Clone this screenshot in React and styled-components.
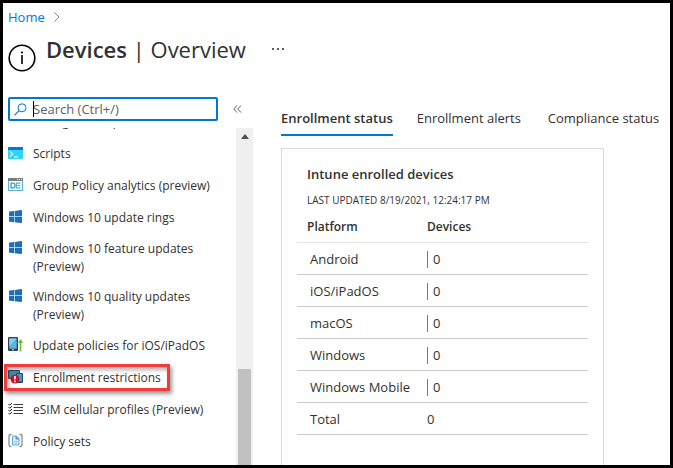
import React from "react";
import styled, { createGlobalStyle, css } from "styled-components";

const GlobalStyle = createGlobalStyle`
  *, *::before, *::after { box-sizing: border-box; }
  body {
    margin: 0;
    background: #fff;
    color: #323130;
    font-family: "Open Sans", "Noto Sans", sans-serif;
    font-size: 13px;
    line-height: 18px;
  }
  button, input { font: inherit; color: inherit; }
`;

const Frame = styled.div`
  display: flex;
  flex-direction: column;
  height: 100vh;
  border: 3px solid #000;
  overflow: hidden;
  background: #fff;
`;

const Breadcrumb = styled.nav`
  display: flex;
  align-items: center;
  gap: 9px;
  padding: 5px 5px 0;
`;

const CrumbLink = styled.a`
  color: #0078d4;
  text-decoration: none;
`;

const Header = styled.header`
  display: flex;
  align-items: flex-start;
  padding: 7px 5px 0;
  height: 57px;
`;

const InfoIcon = styled.svg`
  flex: none;
  margin: 11px 10px 0 0;
`;

const Title = styled.h1`
  margin: 0;
  font-size: 22px;
  line-height: 32px;
  font-weight: 400;
  white-space: nowrap;

  strong { font-weight: 600; }
`;

const IconButton = styled.button`
  display: flex;
  align-items: center;
  justify-content: center;
  flex: none;
  width: 16px;
  height: 24px;
  padding: 0;
  border: 0;
  background: none;
  cursor: pointer;
`;

const MoreButton = styled(IconButton)`
  margin: 4px 0 0 24px;
`;

const Main = styled.div`
  display: flex;
  flex: 1;
  min-height: 0;
  padding-top: 14px;
`;

const Sidebar = styled.aside`
  display: flex;
  flex-direction: column;
  flex: none;
  width: 250px;
`;

const SearchRow = styled.div`
  display: flex;
  align-items: center;
  gap: 11px;
  padding-left: 5px;
`;

const SearchBox = styled.label`
  position: relative;
  display: flex;
  align-items: center;
  gap: 6px;
  width: 210px;
  height: 24px;
  padding-left: 4px;
  border: 2px solid #0078d4;
  border-radius: 2px;
`;

const SearchInput = styled.input`
  flex: 1;
  min-width: 0;
  padding: 0;
  border: 0;
  outline: 0;
  background: none;

  &::placeholder { color: #605e5c; opacity: 1; }
`;

const Caret = styled.span`
  position: absolute;
  left: 23px;
  top: 2px;
  width: 1px;
  height: 16px;
  background: #000;
`;

const NavPane = styled.div`
  display: flex;
  flex: 1;
  min-height: 0;
  margin-top: 7px;
`;

const NavClip = styled.nav`
  display: flex;
  flex-direction: column;
  justify-content: flex-end;
  flex: 1;
  overflow: hidden;
  padding-bottom: 7px;
`;

const NavList = styled.ul`
  margin: 0;
  padding: 0;
  list-style: none;
  font-size: 12px;
`;

const NavItem = styled.li`
  position: relative;
`;

const NavLink = styled.a`
  display: flex;
  align-items: flex-start;
  gap: 9px;
  min-height: 32px;
  padding: ${(p) => (p.$tall ? "6px 30px 6px 5px" : "7px 0 7px 5px")};
  color: inherit;
  text-decoration: none;

  svg { flex: none; }
`;

const Highlight = styled.span`
  position: absolute;
  inset: 2px auto 3px 1px;
  width: 166px;
  border: 3px solid #f23c3c;
  box-shadow: 2px 3px 4px rgba(0, 0, 0, 0.4), inset 2px 3px 4px rgba(0, 0, 0, 0.3);
  pointer-events: none;
`;

const ScrollTrack = styled.div`
  display: flex;
  flex-direction: column;
  align-items: center;
  justify-content: space-between;
  width: 17px;
  padding-top: 6px;
  background: #f0f0f0;
`;

const ScrollThumb = styled.div`
  width: 13px;
  height: 29%;
  background: #c1c1c1;
`;

const Content = styled.main`
  display: flex;
  flex-direction: column;
  flex: 1;
  min-width: 0;
  padding: 9px 0 0 28px;
`;

const Tabs = styled.div`
  display: flex;
  gap: 24px;
  white-space: nowrap;
`;

const Tab = styled.button`
  flex: none;
  min-width: 107px;
  height: 30px;
  padding: 3px 0 7px;
  border: 0;
  border-bottom: 2px solid transparent;
  background: none;
  text-align: left;
  cursor: pointer;
  ${(p) =>
    p.$active &&
    css`
      border-color: #0078d4;
      font-weight: 600;
    `}
`;

const Card = styled.section`
  flex: 1;
  width: 323px;
  max-width: 100%;
  margin-top: 12px;
  padding: 16px 15px 0;
  border: 1px solid #d8d8d8;
  border-bottom: 0;
`;

const CardTitle = styled.h2`
  margin: 0 10px;
  font-size: 13px;
  line-height: 18px;
  font-weight: 600;
`;

const Updated = styled.p`
  margin: 9px 10px 0;
  font-size: 10px;
  line-height: 16px;
`;

const Table = styled.table`
  width: 100%;
  margin-top: 2px;
  border-collapse: collapse;
  table-layout: fixed;
`;

const HeadCell = styled.th`
  width: ${(p) => (p.$name ? "130px" : "auto")};
  height: 32px;
  padding: 2px 0 0 ${(p) => (p.$name ? "10px" : "0")};
  border-bottom: 1px solid #e4e4e4;
  font-size: 12px;
  font-weight: 600;
  text-align: left;
`;

const NameCell = styled.th`
  height: 32px;
  padding: 2px 0 0 13px;
  border-bottom: 1px solid #c8c8c8;
  font-weight: 400;
  text-align: left;
  white-space: nowrap;
`;

const ValueCell = styled.td`
  padding: 2px 0 0;
  border-bottom: 1px solid #c8c8c8;
`;

const Value = styled.span`
  display: block;
  line-height: 17px;
  ${(p) =>
    p.$bar &&
    css`
      padding-left: 5px;
      border-left: 1px solid #00a5d8;
    `}
`;

const ScriptIcon = () => (
  <svg width="16" height="16" viewBox="0 0 16 16" aria-hidden="true">
    <rect x="0" y="2" width="15" height="12" rx="1" fill="#32d4f5" />
    <path d="M0 5V3a1 1 0 0 1 1-1h13a1 1 0 0 1 1 1v2z" fill="#0078d4" />
    <path d="M2 6.5 4.8 9 2 11.5" fill="none" stroke="#d8f7ff" strokeWidth="1.2" />
    <path d="M6 12h4" stroke="#e8fbff" strokeWidth="1.2" />
  </svg>
);

const PolicyIcon = () => (
  <svg width="16" height="16" viewBox="0 0 16 16" aria-hidden="true">
    <rect x=".5" y="1.5" width="14" height="12" fill="#fff" stroke="#59b4d9" />
    <path d="M0 1h15v3H0z" fill="#7a7a7a" />
    <path d="M9 2h1v1H9zM11 2h1v1h-1zM13 2h1v1h-1z" fill="#fff" />
    <path d="M3 6.2h2.2q1.8 0 1.8 2.3t-1.8 2.3H3z" fill="none" stroke="#3f9dc9" strokeWidth="1.3" />
    <path d="M8 6.2h4.5M8 8.5H12.5M8 10.8h4.5M8.5 6v5" stroke="#59b4d9" strokeWidth="1.2" />
  </svg>
);

const WindowsIcon = () => (
  <svg width="16" height="16" viewBox="0 0 16 16" aria-hidden="true">
    <path d="M1 2.7 14 1v13L1 12.6z" fill="#a9cff0" />
    <path d="M1 2.7 6 2v5H1zM7 1.9 14 1v6H7zM1 8h5v5.2l-5-.6zM7 8H14V14l-7-.8z" fill="#1c70ba" />
  </svg>
);

const UpdateIcon = () => (
  <svg width="16" height="16" viewBox="0 0 16 16" aria-hidden="true">
    <rect x="0" y="0" width="10" height="14" rx="1" fill="#34404a" />
    <path d="M1.3 1.5h7.4v10.2H1.3z" fill="#5ab5de" />
    <path d="M1.3 1.5h7.4L1.3 9z" fill="#8bd0ee" />
    <path d="M4 12.8h2" stroke="#ddd" />
    <path d="M12.5 2 15.5 6h-2v8.5h-2V6h-2z" fill="#72b83a" stroke="#fff" strokeWidth=".3" />
  </svg>
);

const RestrictIcon = () => (
  <svg width="16" height="16" viewBox="0 0 16 16" aria-hidden="true">
    <rect x="0" y="1" width="12" height="9" rx="1" fill="#34505f" />
    <path d="M1 2h10v7H1z" fill="#3e8fb5" />
    <rect x="8" y="4" width="7" height="10" rx="1" fill="#27465a" />
    <path d="M9 5h5v7.5H9z" fill="#3aa0d0" />
    <circle cx="7" cy="10" r="4.5" fill="#c4172c" />
    <path d="M7 7v3.5" stroke="#fff" strokeWidth="1.5" />
    <circle cx="7" cy="12.3" r=".9" fill="#fff" />
  </svg>
);

const ProfileIcon = () => (
  <svg width="16" height="16" viewBox="0 0 16 16" aria-hidden="true">
    <path d="M5.5 3.5H15M5.5 6.5H15M5.5 9.5H15M5.5 12.5H15" stroke="#3c3c3c" />
    <path d="M.5 3 1.8 4.3 4 2M.5 6 1.8 7.3 4 5M.5 9l1.3 1.3L4 8M.5 12l1.3 1.3L4 11" fill="none" stroke="#222" />
  </svg>
);

const SetsIcon = () => (
  <svg width="16" height="16" viewBox="0 0 16 16" aria-hidden="true">
    <path d="M3.5 1.5H2.500Q1 1.5 1 3v9q0 1.5 1.5 1.5h1M11.5 1.5h1Q14 1.5 14 3v9q0 1.5-1.5 1.5h-1" fill="none" stroke="#8a8a8a" strokeWidth="1.3" />
    <path d="M4.5 3h4L11 5.5V12H4.500z" fill="#dff1fc" stroke="#59a9e0" />
    <path d="M8 3v3h3" fill="#69b5ea" stroke="#3c93d6" />
    <path d="M6 8.5h3.5M6 10.3h3.5" stroke="#8fc8ee" />
  </svg>
);

const navItems = [
  { label: "Configuration profiles", Icon: ProfileIcon },
  { label: "Scripts", Icon: ScriptIcon },
  { label: "Group Policy analytics (preview)", Icon: PolicyIcon },
  { label: "Windows 10 update rings", Icon: WindowsIcon },
  { label: "Windows 10 feature updates (Preview)", Icon: WindowsIcon, tall: true },
  { label: "Windows 10 quality updates (Preview)", Icon: WindowsIcon, tall: true },
  { label: "Update policies for iOS/iPadOS", Icon: UpdateIcon },
  { label: "Enrollment restrictions", Icon: RestrictIcon, highlighted: true },
  { label: "eSIM cellular profiles (Preview)", Icon: ProfileIcon },
  { label: "Policy sets", Icon: SetsIcon },
];

const platforms = ["Android", "iOS/iPadOS", "macOS", "Windows", "Windows Mobile"];

export default function App() {
  return (
    <>
      <GlobalStyle />
      <Frame>
        <Breadcrumb aria-label="Breadcrumb">
          <CrumbLink href="#home">Home</CrumbLink>
          <svg width="6" height="10" viewBox="0 0 6 10" aria-hidden="true">
            <path d="M.5.5 5 5 .5 9.5" fill="none" stroke="#8a8886" />
          </svg>
        </Breadcrumb>
        <Header>
          <InfoIcon width="28" height="28" viewBox="0 0 28 28" aria-hidden="true">
            <circle cx="14" cy="14" r="12.8" fill="none" stroke="#000" strokeWidth="1.6" />
            <path d="M14 11v9" stroke="#000" strokeWidth="1.6" />
            <circle cx="14" cy="8.5" r="1.1" fill="#000" />
          </InfoIcon>
          <Title>
            <strong>Devices</strong> | Overview
          </Title>
          <MoreButton aria-label="More options">
            <svg width="12" height="2" viewBox="0 0 12 2" aria-hidden="true">
              <path d="M0 0h2v2H0zM5 0h2v2H5zM10 0h2v2h-2z" fill="#605e5c" />
            </svg>
          </MoreButton>
        </Header>
        <Main>
          <Sidebar>
            <SearchRow>
              <SearchBox>
                <svg width="13" height="13" viewBox="0 0 13 13" aria-hidden="true">
                  <circle cx="8" cy="4.8" r="4" fill="none" stroke="#0078d4" />
                  <path d="M5 7.7.5 12.3" stroke="#0078d4" strokeWidth="1.2" />
                </svg>
                <SearchInput type="text" aria-label="Search" placeholder="Search (Ctrl+/)" />
                <Caret />
              </SearchBox>
              <IconButton aria-label="Collapse menu">
                <svg width="9" height="8" viewBox="0 0 9 8" aria-hidden="true">
                  <path d="M4 .5.7 4 4 7.5M8 .5 4.7 4 8 7.5" fill="none" stroke="#605e5c" />
                </svg>
              </IconButton>
            </SearchRow>
            <NavPane>
              <NavClip aria-label="Devices">
                <NavList>
                  {navItems.map(({ label, Icon, tall, highlighted }) => (
                    <NavItem key={label}>
                      <NavLink href="#" $tall={tall}>
                        <Icon />
                        {label}
                      </NavLink>
                      {highlighted && <Highlight />}
                    </NavItem>
                  ))}
                </NavList>
              </NavClip>
              <ScrollTrack aria-hidden="true">
                <svg width="8" height="5" viewBox="0 0 8 5">
                  <path d="M4 0 8 5H0z" fill="#505050" />
                </svg>
                <ScrollThumb />
              </ScrollTrack>
            </NavPane>
          </Sidebar>
          <Content>
            <Tabs role="tablist">
              <Tab role="tab" aria-selected="true" $active>
                Enrollment status
              </Tab>
              <Tab role="tab" aria-selected="false">Enrollment alerts</Tab>
              <Tab role="tab" aria-selected="false">Compliance status</Tab>
            </Tabs>
            <Card>
              <CardTitle>Intune enrolled devices</CardTitle>
              <Updated>LAST UPDATED 8/19/2021, 12:24:17 PM</Updated>
              <Table>
                <thead>
                  <tr>
                    <HeadCell scope="col" $name>Platform</HeadCell>
                    <HeadCell scope="col">Devices</HeadCell>
                  </tr>
                </thead>
                <tbody>
                  {platforms.map((name) => (
                    <tr key={name}>
                      <NameCell scope="row">{name}</NameCell>
                      <ValueCell>
                        <Value $bar>0</Value>
                      </ValueCell>
                    </tr>
                  ))}
                  <tr>
                    <NameCell scope="row">Total</NameCell>
                    <ValueCell>
                      <Value>0</Value>
                    </ValueCell>
                  </tr>
                </tbody>
              </Table>
            </Card>
          </Content>
        </Main>
      </Frame>
    </>
  );
}
